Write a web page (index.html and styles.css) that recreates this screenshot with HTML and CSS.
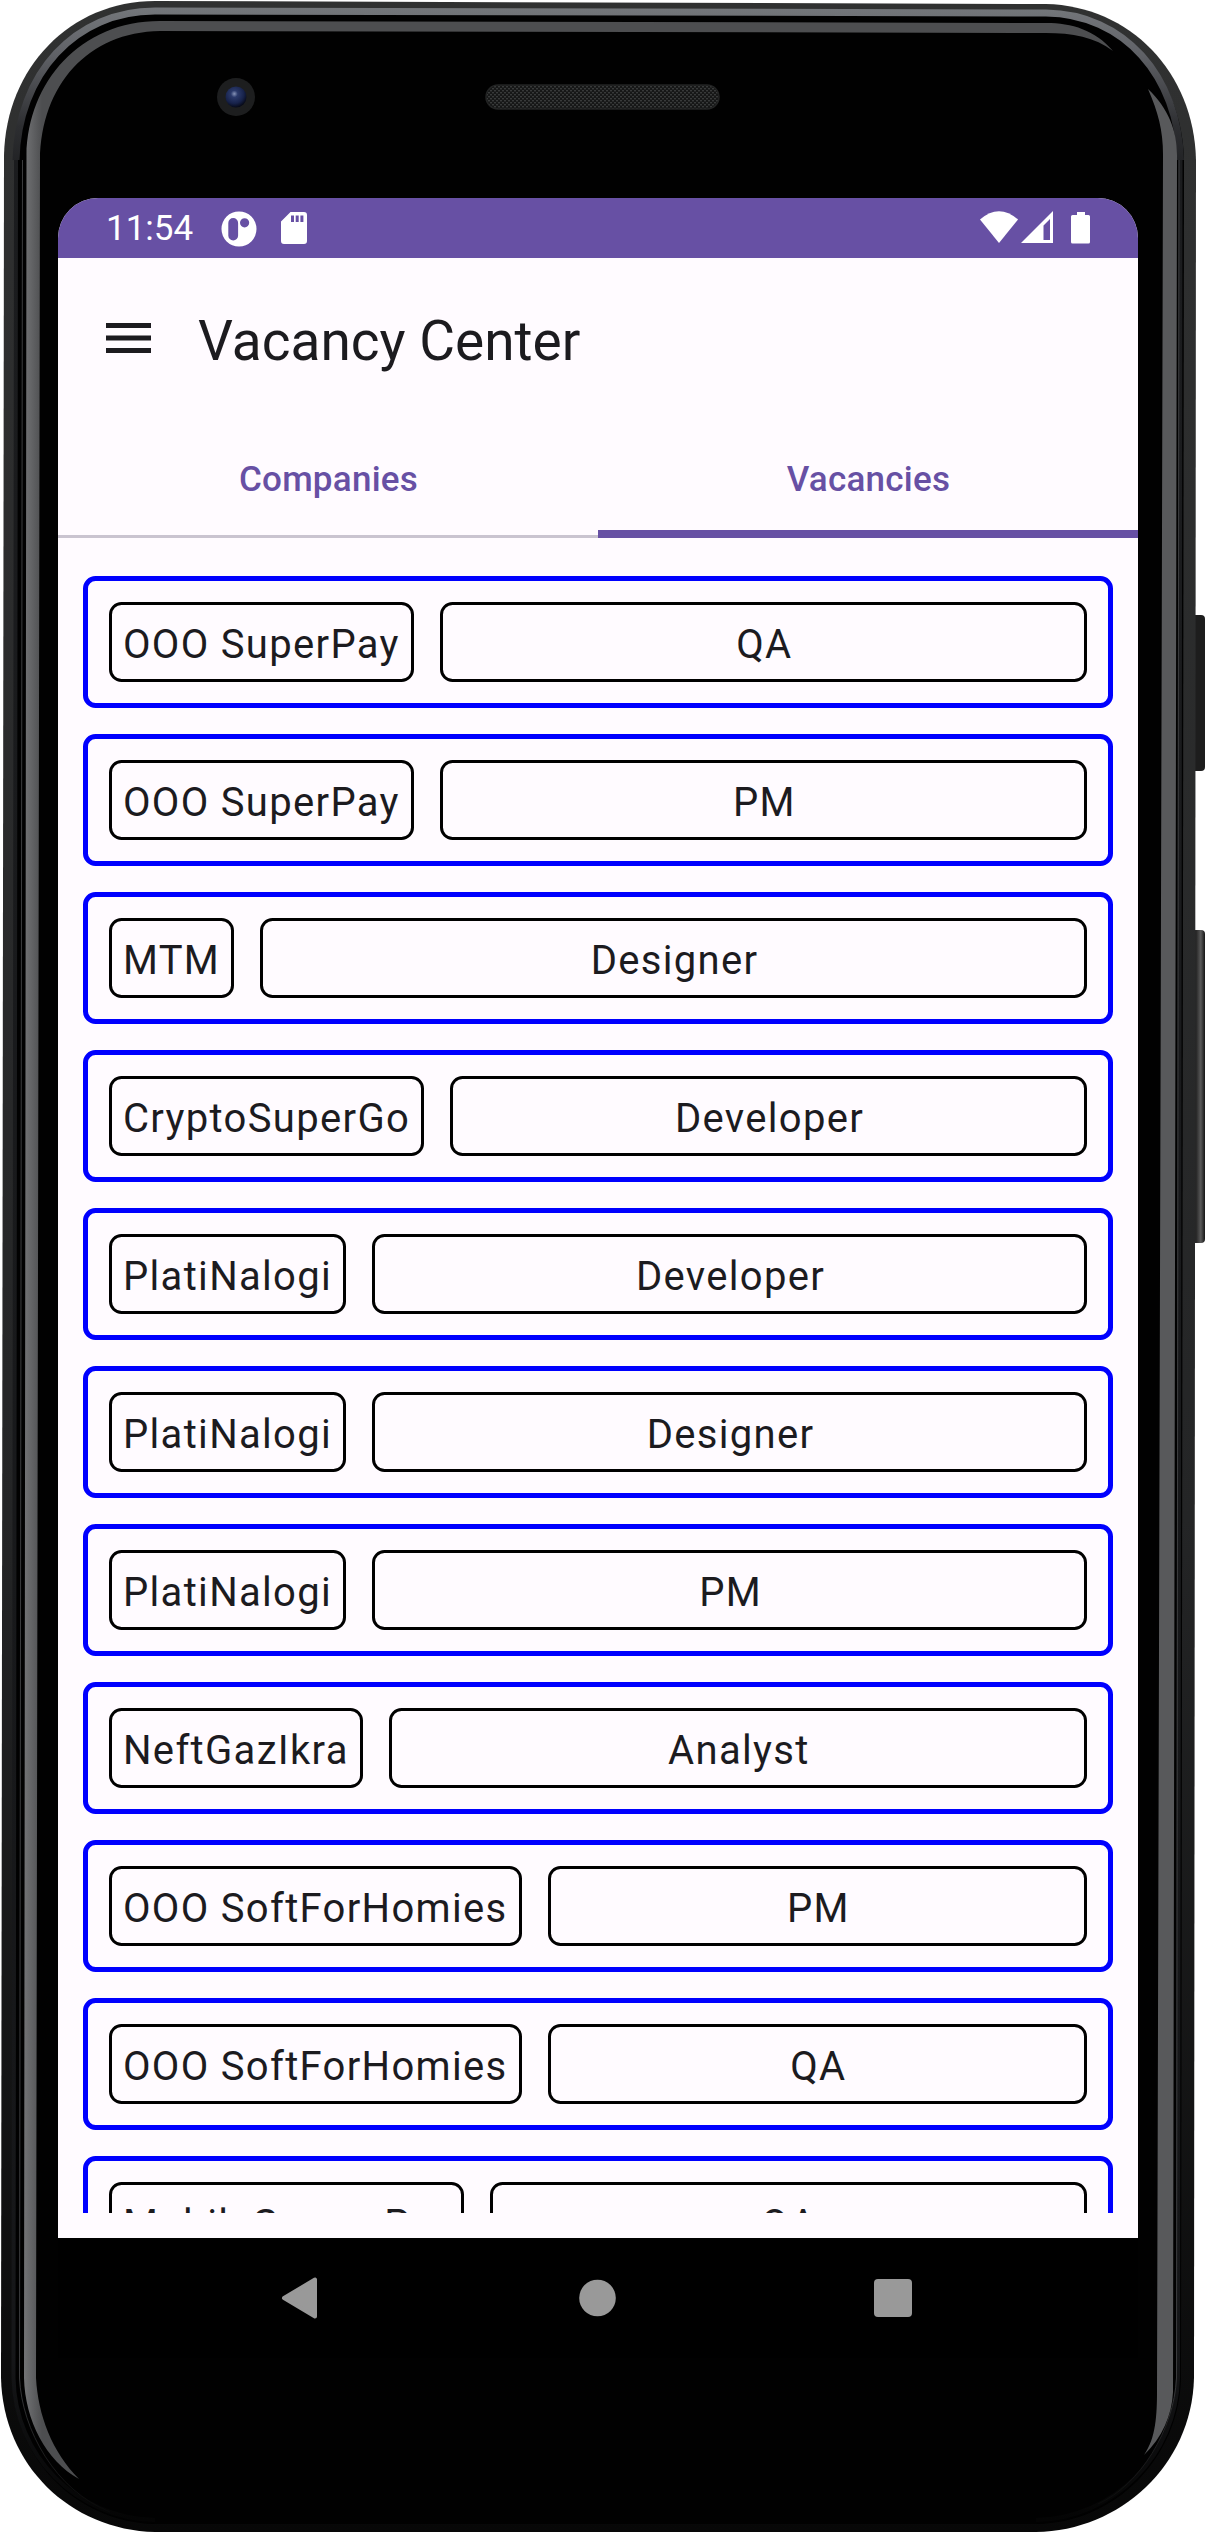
FILE: index.html
```
<!DOCTYPE html>
<html lang="en">
<head>
<meta charset="utf-8">
<title>Vacancy Center</title>
<link rel="stylesheet" href="styles.css">
</head>
<body>
<div class="phone">
  <svg class="frame" viewBox="0 0 1206 2533" aria-hidden="true">
    <defs>
      <linearGradient id="key" x1="0" x2="1" y1="0" y2="0">
        <stop offset="0" stop-color="#101010"/><stop offset=".5" stop-color="#2a2a2a"/><stop offset=".75" stop-color="#5a5a5a"/><stop offset="1" stop-color="#151515"/>
      </linearGradient>
      <linearGradient id="edge" x1="0" x2="0" y1="0" y2="1">
        <stop offset="0" stop-color="#303131"/><stop offset=".6" stop-color="#242526"/><stop offset="1" stop-color="#070707"/>
      </linearGradient>
      <linearGradient id="shine" gradientUnits="userSpaceOnUse" x1="0" x2="0" y1="0" y2="180">
        <stop offset="0" stop-color="#777a7e"/><stop offset=".3" stop-color="#606267"/><stop offset=".7" stop-color="#2d2e31"/><stop offset="1" stop-color="#1d1e20"/>
      </linearGradient>
      <linearGradient id="rim" gradientUnits="userSpaceOnUse" x1="22" x2="42" y1="0" y2="0">
        <stop offset="0" stop-color="#77787a"/><stop offset="1" stop-color="#4d4e50"/>
      </linearGradient>
      <linearGradient id="hair" gradientUnits="userSpaceOnUse" x1="0" x2="0" y1="160" y2="2512">
        <stop offset="0" stop-color="#3c3d3f"/><stop offset=".94" stop-color="#3c3d3f"/><stop offset="1" stop-color="#080808"/>
      </linearGradient>
      <linearGradient id="side" gradientUnits="userSpaceOnUse" x1="0" x2="0" y1="160" y2="2520">
        <stop offset="0" stop-color="#1b1c1e"/><stop offset=".93" stop-color="#161719"/><stop offset="1" stop-color="#040404"/>
      </linearGradient>
      <radialGradient id="lens" cx=".42" cy=".35" r=".65">
        <stop offset="0" stop-color="#8794b8"/><stop offset=".25" stop-color="#2b3a6b"/><stop offset=".7" stop-color="#17224a"/><stop offset="1" stop-color="#070a18"/>
      </radialGradient>
      <pattern id="mesh" width="4" height="4" patternUnits="userSpaceOnUse">
        <rect width="4" height="4" fill="#161717"/><rect width="2" height="1.4" fill="#383a3a"/><rect x="2" y="2" width="2" height="1.4" fill="#383a3a"/>
      </pattern>
    </defs>
    <rect x="1188" y="615" width="17" height="156" rx="4" fill="#1d1d1d"/>
    <rect x="1188" y="930" width="17" height="313" rx="4" fill="url(#key)"/>
    <path fill="url(#edge)" d="M4 155C6 68 70 1 155 1L1046 4C1130 6 1194 72 1196 160L1194 2378C1192 2465 1120 2531 1036 2532L155 2532C70 2530 3 2465 1 2378Z"/>
    <path fill="#010101" d="M16 155C18 74 78 12 155 12L1046 14C1124 15 1182 75 1184 160L1181 2378C1179 2458 1115 2523 1036 2524L155 2524C75 2522 14 2458 12 2378Z"/>
    <path fill="none" stroke="url(#side)" stroke-width="4" d="M16 160L13.500 2378C15 2455 75 2518 155 2520M1180.500 160L1178 2378C1176 2455 1115 2518 1036 2520"/>
    <path fill="none" stroke="url(#shine)" stroke-width="7" d="M16 160C18 74 75 11 155 11L1046 13C1124 14 1178 76 1180.500 160"/>
    <path fill="none" stroke="url(#hair)" stroke-width="1" d="M22.500 160L19.500 2378C22 2430 55 2490 110 2512M1179 160L1176.500 2378C1174 2430 1140 2485 1098 2504"/>
    <path fill="url(#rim)" d="M26.500 155C28 82 80 21 160 21L1046 23C1072 23 1095 30 1113 51C1095 37 1072 33 1046 33L160 31C88 32 41 85 40 160L36 2378C38 2415 52 2452 79 2479C46 2461 25 2420 24 2378Z"/>
    <path fill="#58595b" d="M1148 89C1168 108 1177 130 1177 155L1173 2392C1172 2415 1162 2438 1144 2455C1156 2438 1157 2415 1157 2390L1163 155C1163 130 1158 112 1148 89Z"/>
    <circle cx="236" cy="97" r="19" fill="#1d1e1f"/><circle cx="236" cy="97" r="10.500" fill="url(#lens)"/>
    <rect x="486" y="85" width="233" height="24" rx="12" fill="url(#mesh)" stroke="#222323" stroke-width="1.500"/>
  </svg>
  <main class="screen">
    <header class="status">
      <span class="clock">11:54</span>
      <svg class="app" viewBox="0 0 36 36"><path fill="#fff" fill-rule="evenodd" d="M18 .5a17.500 17.500 0 1 0 0 35a17.500 17.500 0 1 0 0-35zM12.200 7a4.900 4.900 0 0 1 4.900 4.900v12.600a4.900 4.900 0 0 1-9.800 0V11.900a4.900 4.900 0 0 1 4.900-4.900zM23.600 7.200a4.600 4.600 0 1 1 0 9.200a4.600 4.600 0 1 1 0-9.200z"/></svg>
      <svg class="sd" viewBox="0 0 26 32"><path fill="#fff" fill-rule="evenodd" d="M9.500 0H23a3 3 0 0 1 3 3V29a3 3 0 0 1-3 3H3a3 3 0 0 1-3-3V9.500zM10 3.500v6.500h3V3.500zM14.700 3.500v6.500h3V3.500zM19.400 3.500v6.500h3V3.500z"/></svg>
      <svg class="signals" viewBox="0 0 110 33"><g fill="#fff"><path d="M0 8.500Q19-8 38 8.500L19 32z"/><path fill-rule="evenodd" d="M73 0V32H41zM70 8L63.500 14.500V29H70z"/><path d="M97 1h8v3h3.500a1.500 1.500 0 0 1 1.500 1.500V31a1.500 1.500 0 0 1-1.500 1.500h-16A1.500 1.500 0 0 1 91 31V5.500A1.500 1.500 0 0 1 92.500 4H97z"/></g></svg>
    </header>
    <div class="topbar">
      <svg class="menu" viewBox="0 0 45 30"><path fill="#1c1b1f" d="M0 0h45v5H0zM0 12.500h45v5H0zM0 25h45v5H0z"/></svg>
      <h1 class="title">Vacancy Center</h1>
    </div>
    <nav class="tabs"><div class="tab">Companies</div><div class="tab active">Vacancies</div></nav>
    <section class="list">
      <div class="row"><span class="cell">OOO SuperPay</span><span class="cell role">QA</span></div>
      <div class="row"><span class="cell">OOO SuperPay</span><span class="cell role">PM</span></div>
      <div class="row"><span class="cell">MTM</span><span class="cell role">Designer</span></div>
      <div class="row"><span class="cell">CryptoSuperGo</span><span class="cell role">Developer</span></div>
      <div class="row"><span class="cell">PlatiNalogi</span><span class="cell role">Developer</span></div>
      <div class="row"><span class="cell">PlatiNalogi</span><span class="cell role">Designer</span></div>
      <div class="row"><span class="cell">PlatiNalogi</span><span class="cell role">PM</span></div>
      <div class="row"><span class="cell">NeftGazIkra</span><span class="cell role">Analyst</span></div>
      <div class="row"><span class="cell">OOO SoftForHomies</span><span class="cell role">PM</span></div>
      <div class="row"><span class="cell">OOO SoftForHomies</span><span class="cell role">QA</span></div>
      <div class="row"><span class="cell">MobileGamesPro</span><span class="cell role">QA</span></div>
    </section>
    <footer class="navbar">
      <svg viewBox="0 0 40 42"><path fill="#999" stroke="#999" stroke-width="4" stroke-linejoin="round" d="M4 21L35 2.500V39.500z"/></svg>
      <svg viewBox="0 0 40 42"><circle cx="20.500" cy="21" r="18.300" fill="#999"/></svg>
      <svg viewBox="0 0 40 42"><rect x="1" y="2" width="38" height="38" rx="4" fill="#999"/></svg>
    </footer>
  </main>
</div>
</body>
</html>
```
FILE: styles.css
```
body { margin: 0; background: #fff; font-family: Roboto, sans-serif; }
.phone { position: relative; box-sizing: border-box; width: 1206px; height: 2533px; padding: 198px 68px 175px 58px; overflow: hidden; }
.frame { position: absolute; inset: 0; width: 1206px; height: 2533px; }
.screen { position: relative; display: flex; flex-direction: column; height: 2160px; border-radius: 40px 40px 0 0; overflow: hidden; background: #fffbff; color: #1c1b1f; }
.status { box-sizing: border-box; display: flex; align-items: center; height: 60px; padding: 0 48px; background: #6750a4; color: #fff; }
.clock { width: 115px; font-size: 35px; line-height: 60px; padding-top: 2px; }
.app { width: 36px; height: 36px; margin-top: 1px; }
.sd { width: 26px; height: 32px; margin-left: 24px; }
.signals { width: 110px; height: 33px; margin: 0 0 1px auto; }
.topbar { display: flex; align-items: center; height: 160px; padding-left: 47.500px; }
.menu { width: 45px; height: 30px; }
.title { margin: 0 0 0 47.500px; padding-top: 5px; font-size: 55px; font-weight: 400; line-height: 70px; }
.tabs { display: grid; grid-template-columns: 1fr 1fr; height: 120px; }
.tab { box-sizing: border-box; height: 120px; padding-left: 1px; border-bottom: 3px solid #cac4d0; color: #6750a4; font-size: 35px; font-weight: 500; letter-spacing: .25px; line-height: 123px; text-align: center; }
.active { border-bottom: 8px solid #6750a4; }
.list { box-sizing: border-box; display: flex; flex-direction: column; gap: 26px; height: 1675px; margin-bottom: 25px; padding: 38px 25px 0; overflow: hidden; }
.row { box-sizing: border-box; display: flex; flex: none; gap: 26px; height: 132px; padding: 21px; border: 5px solid #00f; border-radius: 12.500px; }
.cell { box-sizing: border-box; height: 80px; padding: 0 11px; border: 3px solid #000; border-radius: 12.500px; font-size: 40px; letter-spacing: 1.320px; line-height: 79px; white-space: nowrap; }
.role { flex: 1; padding: 0 10px 0 12px; text-align: center; }
.navbar { box-sizing: border-box; display: flex; flex: none; justify-content: space-between; align-items: center; height: 120px; padding: 0 225px 0 222px; background: #000; }
.navbar svg { width: 40px; height: 42px; }
```
